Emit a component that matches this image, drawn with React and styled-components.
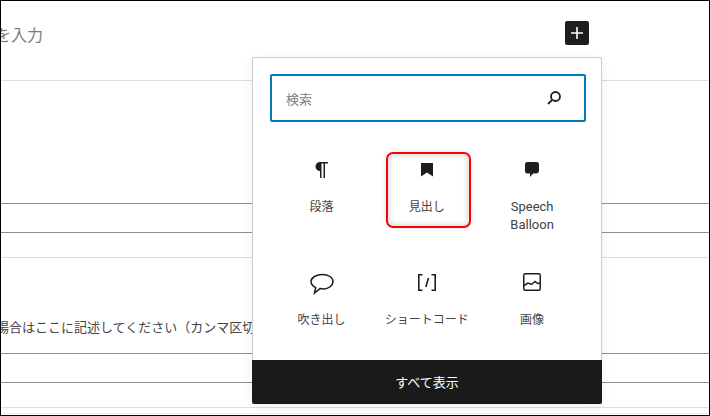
import React from "react";
import styled, { createGlobalStyle } from "styled-components";

const Global = createGlobalStyle`
  html, body { margin: 0; padding: 0; background: #fff; }
  * { box-sizing: border-box; }
  body { font-family: "Noto Sans CJK JP", "Noto Sans", sans-serif; color: #1e1e1e; }
`;

const Page = styled.div`
  position: relative;
  width: 710px;
  height: 416px;
  overflow: hidden;
  background: #fff;
  border: 1px solid #000;
  display: flex;
  flex-direction: column;
`;

const TitleRow = styled.div`
  height: 80px;
  flex: none;
  display: flex;
  justify-content: space-between;
  padding: 20px 120px 0 0;
  border-bottom: 1px solid #ddd;
`;

const TitleHint = styled.div`
  font-size: 16px;
  line-height: 26px;
  color: #7d7d7d;
  margin-left: -6px;
  white-space: nowrap;
`;

const AddButton = styled.div`
  width: 24px;
  height: 24px;
  background: #1e1e1e;
  border-radius: 2px;
  color: #fff;
  display: flex;
  align-items: center;
  justify-content: center;
`;

const Band = styled.div`
  flex: none;
  height: ${(p) => p.$h}px;
  border-bottom: 1px solid ${(p) => p.$line};
`;

const NoteRow = styled.div`
  flex: none;
  height: 96px;
  border-bottom: 1px solid #8c8f94;
  padding-top: 59px;
  font-size: 13px;
  line-height: 20px;
  color: #444;
  white-space: nowrap;
  text-indent: -5px;
`;

const Popover = styled.div`
  position: absolute;
  left: 251px;
  top: 56px;
  width: 350px;
  height: 347px;
  background: #fff;
  border: 1px solid #ccc;
  border-bottom: none;
  border-radius: 2px;
  box-shadow: 0 3px 12px rgba(0, 0, 0, 0.06);
  display: flex;
  flex-direction: column;
`;

const SearchBox = styled.div`
  flex: none;
  margin: 16px 15px 0 17px;
  height: 48px;
  border: 2px solid #007cba;
  border-radius: 2px;
  padding: 0 22px 0 14px;
  display: flex;
  align-items: center;
  justify-content: space-between;
  font-size: 13px;
  color: #808080;
`;

const Grid = styled.div`
  flex: 1;
  min-height: 0;
  display: grid;
  grid-template-columns: repeat(3, 105.25px);
  grid-template-rows: 112.500px 112.500px;
  padding: 30px 0 0 16px;
`;

const Item = styled.div`
  position: relative;
  display: flex;
  flex-direction: column;
  align-items: center;
  text-align: center;
  padding-top: 6px;
  font-size: 12px;
  line-height: 18px;
  color: #444;
`;

const IconSlot = styled.div`
  height: 24px;
  width: 24px;
  margin-bottom: 15px;
  display: flex;
  align-items: center;
  justify-content: center;
  color: #1e1e1e;
`;

const Label = styled.span`
  font-family: ${(p) => (p.$latin ? 'Roboto, "Noto Sans", sans-serif' : "inherit")};
  font-size: ${(p) => (p.$latin ? "13px" : "12px")};
  width: ${(p) => (p.$latin ? "60px" : "auto")};
  margin-top: ${(p) => (p.$latin ? "1px" : "0")};
`;

const Highlight = styled.div`
  position: absolute;
  left: 11.750px;
  top: 0;
  width: 85px;
  height: 76px;
  border: 2px solid #f00;
  border-radius: 7px;
  box-shadow: 0 0 5px rgba(0, 0, 0, 0.1), inset 0 0 5px 2px rgba(0, 0, 0, 0.13);
`;

const ShowAll = styled.div`
  flex: none;
  height: 44px;
  margin: 0 0 0 -1px;
  background: #1a1a1a;
  color: #fff;
  border-radius: 0 0 2px 2px;
  font-size: 13px;
  line-height: 44px;
  text-align: center;
  width: 350px;
`;

const Svg = ({ children, size = 24 }) => (
  <svg width={size} height={size} viewBox="0 0 24 24" fill="currentColor" aria-hidden="true">
    {children}
  </svg>
);

const blocks = [
  { label: "段落", icon: <path d="M18 4H10c-2.500 0-4.500 2-4.500 4.500S7.500 13 10 13v7h1.500V5.500h2V20H15V5.500h3z" /> },
  { label: "見出し", hot: true, icon: <path d="M6 5h12v13.500L12 14.500l-6 4z" /> },
  { label: "Speech Balloon", latin: true, icon: <path d="M7.500 4h9a2.500 2.500 0 0 1 2.500 2.500v6a3 3 0 0 1-3 3h-3l-3 3.500v-3.500H7.500a2.500 2.500 0 0 1-2.500-2.500v-6.500a2.500 2.500 0 0 1 2.500-2.500z" /> },
  {
    label: "吹き出し",
    icon: (
      <path
        fill="none"
        stroke="currentColor"
        strokeWidth="1.500"
        d="M12.500 3.500C18.500 3.500 23 6.500 23 10.500S18.500 18 13.500 18c-1.300 0-2.500-.2-3.500-.4L4.500 22l1.300-5.300C3 15.300 1 13.500 1 10.500 1 6.500 6.500 3.500 12.500 3.500z"
      />
    ),
  },
  {
    label: "ショートコード",
    icon: (
      <g fill="none" stroke="currentColor" strokeWidth="1.600">
        <path d="M7.500 3.800H3.800v15.400h3.700M16.500 3.800h3.700v15.400h-3.700" />
        <path d="M13.500 7l-2.700 9" />
      </g>
    ),
  },
  {
    label: "画像",
    icon: (
      <g fill="none" stroke="currentColor" strokeWidth="1.500">
        <rect x="3.750" y="2.750" width="16.500" height="16.500" rx="1.500" />
        <path d="M4 14.500l4-2.500 3.500 1.500 3.500-3 2.500 2 2.500-.5" />
      </g>
    ),
  },
];

export default function App() {
  return (
    <>
      <Global />
      <Page>
        <TitleRow>
          <TitleHint>を入力</TitleHint>
          <AddButton>
            <Svg>
              <path d="M18 11.200h-5.200V6h-1.600v5.200H6v1.600h5.200V18h1.600v-5.200H18z" />
            </Svg>
          </AddButton>
        </TitleRow>
        <Band $h={123} $line="#8c8f94" />
        <Band $h={29} $line="#8c8f94" />
        <Band $h={25} $line="#ddd" />
        <NoteRow>場合はここに記述してください（カンマ区切り）</NoteRow>
        <Band $h={29} $line="#8c8f94" />
        <Band $h={25} $line="#ddd" />
        <Band $h={6} $line="#eee" />
        <Popover>
          <SearchBox>
            <span>検索</span>
            <svg width="16" height="16" viewBox="0 0 16 16" fill="none" stroke="#1e1e1e" strokeWidth="1.800" aria-hidden="true">
              <circle cx="9.500" cy="6.500" r="4.500" />
              <path d="M6.200 9.800L2 14" />
            </svg>
          </SearchBox>
          <Grid>
            {blocks.map((b) => (
              <Item key={b.label}>
                {b.hot && <Highlight />}
                <IconSlot>
                  <Svg>{b.icon}</Svg>
                </IconSlot>
                <Label $latin={b.latin}>{b.label}</Label>
              </Item>
            ))}
          </Grid>
          <ShowAll>すべて表示</ShowAll>
        </Popover>
      </Page>
    </>
  );
}
